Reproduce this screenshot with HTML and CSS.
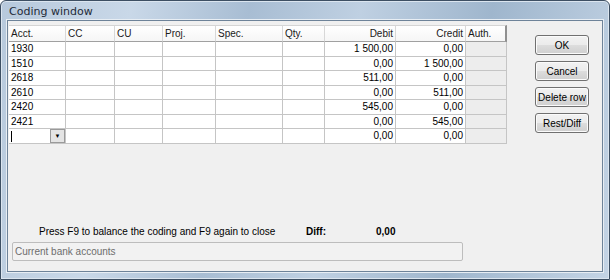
FILE: index.html
```html
<!DOCTYPE html>
<html>
<head>
    <meta charset="UTF-8" />
    <link rel="stylesheet" href="styles.css">
</head>
<body>
    <div class="window">
        <div class="titlebar">Coding window</div>
        <div class="client">
            <div class="top">
                <div class="grid">
                    <div class="row head">
                        <div class="c">Acct.</div>
                        <div class="c">CC</div>
                        <div class="c">CU</div>
                        <div class="c">Proj.</div>
                        <div class="c">Spec.</div>
                        <div class="c">Qty.</div>
                        <div class="c num">Debit</div>
                        <div class="c num">Credit</div>
                        <div class="c">Auth.</div>
                    </div>
                    <div class="row">
                        <div class="c">1930</div><div class="c"></div><div class="c"></div><div class="c"></div><div class="c"></div><div class="c"></div>
                        <div class="c num">1 500,00</div><div class="c num">0,00</div><div class="c auth"></div>
                    </div>
                    <div class="row">
                        <div class="c">1510</div><div class="c"></div><div class="c"></div><div class="c"></div><div class="c"></div><div class="c"></div>
                        <div class="c num">0,00</div><div class="c num">1 500,00</div><div class="c auth"></div>
                    </div>
                    <div class="row">
                        <div class="c">2618</div><div class="c"></div><div class="c"></div><div class="c"></div><div class="c"></div><div class="c"></div>
                        <div class="c num">511,00</div><div class="c num">0,00</div><div class="c auth"></div>
                    </div>
                    <div class="row">
                        <div class="c">2610</div><div class="c"></div><div class="c"></div><div class="c"></div><div class="c"></div><div class="c"></div>
                        <div class="c num">0,00</div><div class="c num">511,00</div><div class="c auth"></div>
                    </div>
                    <div class="row">
                        <div class="c">2420</div><div class="c"></div><div class="c"></div><div class="c"></div><div class="c"></div><div class="c"></div>
                        <div class="c num">545,00</div><div class="c num">0,00</div><div class="c auth"></div>
                    </div>
                    <div class="row">
                        <div class="c">2421</div><div class="c"></div><div class="c"></div><div class="c"></div><div class="c"></div><div class="c"></div>
                        <div class="c num">0,00</div><div class="c num">545,00</div><div class="c auth"></div>
                    </div>
                    <div class="row">
                        <div class="c combo"><span class="caret"></span><span class="drop">&#9660;</span></div>
                        <div class="c"></div><div class="c"></div><div class="c"></div><div class="c"></div><div class="c"></div>
                        <div class="c num">0,00</div><div class="c num">0,00</div><div class="c auth"></div>
                    </div>
                </div>
                <div class="buttons">
                    <button class="btn">OK</button>
                    <button class="btn">Cancel</button>
                    <button class="btn">Delete row</button>
                    <button class="btn">Rest/Diff</button>
                </div>
            </div>
            <div class="hint">
                <span class="hint-text">Press F9 to balance the coding and F9 again to close</span>
                <span class="diff-label">Diff:</span>
                <span class="diff-value">0,00</span>
            </div>
            <div class="status">Current bank accounts</div>
        </div>
    </div>
</body>
</html>
```

FILE: styles.css
```css
html, body {
    margin: 0;
    padding: 0;
    background: #ffffff;
}

body {
    font-family: "Liberation Sans", "DejaVu Sans", sans-serif;
    font-size: 10px;
    color: #000;
}

.window {
    width: 610px;
    height: 280px;
    box-sizing: border-box;
    border: 1px solid #3d4f63;
    border-radius: 6px 6px 0 0;
    background: linear-gradient(100deg, #b7c9dc 0%, #c9d8e8 20%, #a8bdd3 38%, #bfd0e2 55%, #9fb6cd 75%, #c4d4e5 100%);
    padding: 0 6px 7px 6px;
    display: flex;
    flex-direction: column;
    box-shadow: inset 0 0 0 1px #dbe5ef;
}

.titlebar {
    height: 19px;
    line-height: 22px;
    padding-left: 2px;
    font-family: "DejaVu Sans", sans-serif;
    font-size: 11px;
    color: #1e2a38;
}

.client {
    flex: 1;
    background: #f0f0f0;
    border: 1px solid #6e8399;
    box-shadow: 0 0 0 1px #e8eef4;
    display: flex;
    flex-direction: column;
    padding: 4px 0 0 1px;
}

.top {
    display: flex;
    height: 199px;
}

.grid {
    width: 499px;
    display: flex;
    flex-direction: column;
}

.row {
    display: grid;
    grid-template-columns: 57px 49px 48px 53px 67px 42px 71px 70px 41px;
    height: 14.5px;
}

.c {
    background: #ffffff;
    border-right: 1px solid #c5c5c5;
    border-bottom: 1px solid #c5c5c5;
    padding: 0 2px;
    line-height: 14px;
    white-space: nowrap;
    overflow: hidden;
}

.num {
    text-align: right;
}

.auth {
    background: #ededed;
}

.head {
    height: 17px;
}

.head .c {
    background: linear-gradient(#ffffff, #f6f6f6);
    border-top: 1px solid #d5d5d5;
    border-right-color: #d8d8d8;
    border-bottom-color: #a0a0a0;
    line-height: 16px;
    font-size: 10px;
    color: #1a1a1a;
}

.head .c:last-child {
    border-right: 2px solid #909090;
}

.combo {
    padding: 0;
    display: flex;
    align-items: stretch;
}

.caret {
    flex: 1;
    border-left: 1px solid #000;
    margin: 2px 0 1px 2px;
}

.drop {
    width: 13px;
    background: #e4e4e4;
    border: 1px solid #9a9a9a;
    font-size: 6px;
    line-height: 12px;
    text-align: center;
}

.buttons {
    flex: 1;
    display: flex;
    flex-direction: column;
    align-items: center;
    gap: 6px;
    padding-top: 10px;
    padding-left: 14px;
}

.btn {
    width: 54px;
    height: 20px;
    padding: 0;
    font-family: "Liberation Sans", "DejaVu Sans", sans-serif;
    font-size: 10px;
    white-space: nowrap;
    color: #000;
    border: 1px solid #707070;
    border-radius: 3px;
    background: linear-gradient(#f2f2f2 0%, #ebebeb 50%, #dddddd 51%, #cfcfcf 100%);
    box-shadow: inset 0 0 0 1px #fbfbfb;
}

.hint {
    display: flex;
    align-items: baseline;
    height: 16px;
    line-height: 16px;
    font-size: 10px;
}

.hint-text {
    width: 267px;
    padding-left: 30px;
}

.diff-label {
    font-weight: bold;
    width: 70px;
}

.diff-value {
    font-weight: bold;
}

.status {
    margin: 2px 0 0 3px;
    width: 447px;
    height: 17px;
    border: 1px solid #bdbdbd;
    border-radius: 2px;
    background: #f2f2f2;
    color: #6d6d6d;
    font-size: 10px;
    line-height: 17px;
    padding-left: 2px;
}
```
